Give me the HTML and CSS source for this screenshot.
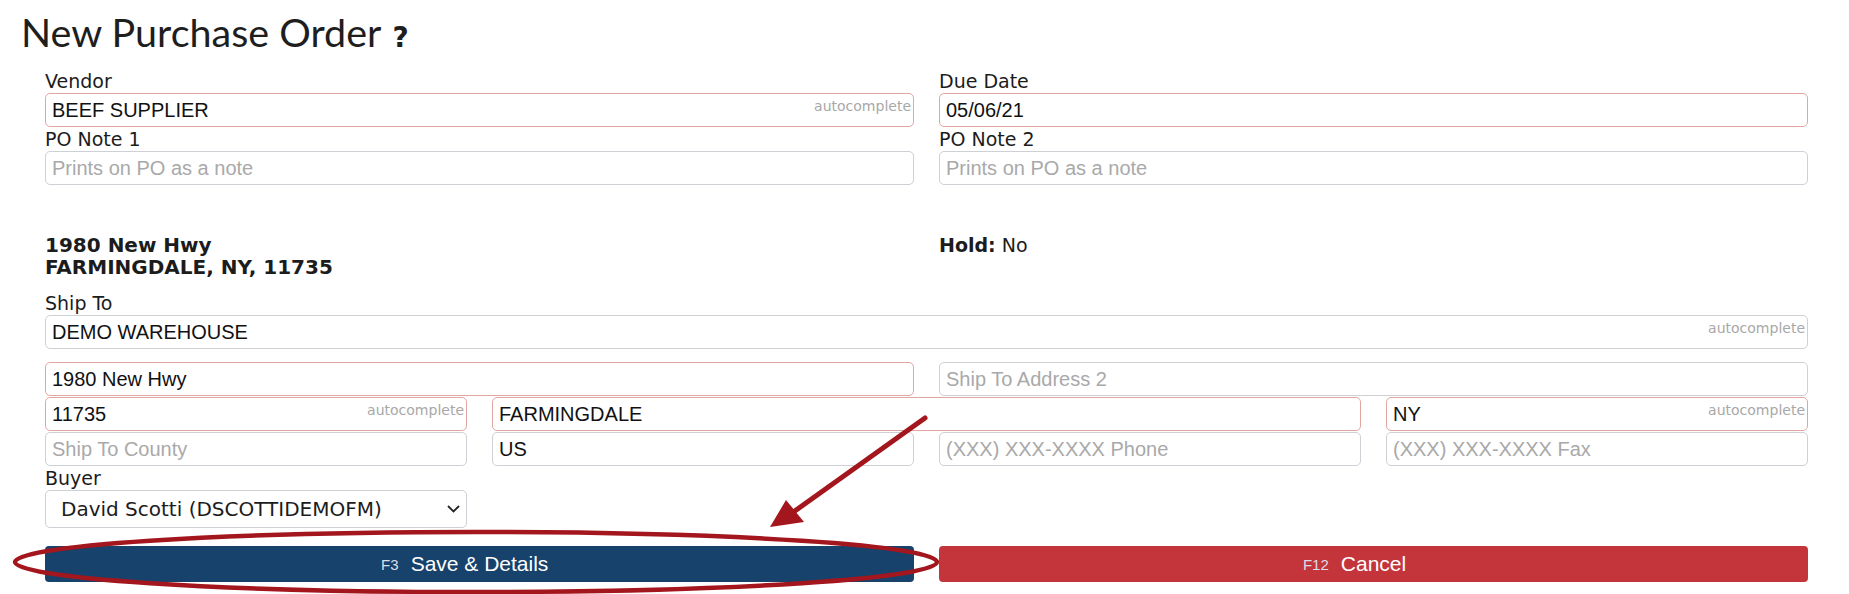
FILE: index.html
```html
<!DOCTYPE html>
<html lang="en">
  <head>
    <meta charset="UTF-8" />
    <meta name="viewport" content="width=device-width, initial-scale=1.0" />
    <title>New Purchase Order</title>
    <link rel="stylesheet" href="styles.css">
  </head>
  <body>
    <h1 class="title">New Purchase Order<span class="help">?</span></h1>

    <form class="po-form">
      <div class="grid two">
        <div class="field">
          <label>Vendor</label>
          <div class="input-wrap">
            <input class="req" type="text" value="BEEF SUPPLIER" />
            <span class="hint">autocomplete</span>
          </div>
        </div>
        <div class="field">
          <label>Due Date</label>
          <input class="req" type="text" value="05/06/21" />
        </div>
        <div class="field">
          <label>PO Note 1</label>
          <input type="text" placeholder="Prints on PO as a note" />
        </div>
        <div class="field">
          <label>PO Note 2</label>
          <input type="text" placeholder="Prints on PO as a note" />
        </div>
      </div>

      <div class="grid two vendor-info">
        <div class="vendor-address">1980 New Hwy<br />FARMINGDALE, NY, 11735</div>
        <div class="hold"><b>Hold:</b> No</div>
      </div>

      <div class="field ship-to">
        <label>Ship To</label>
        <div class="input-wrap">
          <input type="text" value="DEMO WAREHOUSE" />
          <span class="hint">autocomplete</span>
        </div>
      </div>

      <div class="address-rows">
        <div class="grid two">
          <input class="req" type="text" value="1980 New Hwy" />
          <input type="text" placeholder="Ship To Address 2" />
        </div>
        <div class="grid four">
          <div class="input-wrap">
            <input class="req" type="text" value="11735" />
            <span class="hint">autocomplete</span>
          </div>
          <input class="req span-2" type="text" value="FARMINGDALE" />
          <div class="input-wrap">
            <input class="req" type="text" value="NY" />
            <span class="hint">autocomplete</span>
          </div>
        </div>
        <div class="grid four">
          <input type="text" placeholder="Ship To County" />
          <input type="text" value="US" />
          <input type="text" placeholder="(XXX) XXX-XXXX Phone" />
          <input type="text" placeholder="(XXX) XXX-XXXX Fax" />
        </div>
      </div>

      <div class="grid four">
        <div class="field">
          <label>Buyer</label>
          <div class="select-wrap">
            <select>
              <option>David Scotti (DSCOTTIDEMOFM)</option>
            </select>
            <svg class="chevron" width="13" height="8" viewBox="0 0 13 8">
              <path d="M1 1 L6.5 6.5 L12 1" fill="none" stroke="#222" stroke-width="1.8" />
            </svg>
          </div>
        </div>
      </div>

      <div class="grid two actions">
        <button type="button" class="btn btn-save"><span class="label"><span class="key">F3</span>Save &amp; Details</span></button>
        <button type="button" class="btn btn-cancel"><span class="label"><span class="key">F12</span>Cancel</span></button>
      </div>
    </form>

    <!-- annotation drawn over the screenshot -->
    <svg class="annotation" width="1849" height="594" viewBox="0 0 1849 594">
      <ellipse cx="476" cy="562" rx="461" ry="30" fill="none" stroke="#a3161d" stroke-width="4.5" />
      <line x1="925" y1="418" x2="792" y2="513" stroke="#a3161d" stroke-width="5" stroke-linecap="round" />
      <polygon points="770,527 786,500 804,522" fill="#a3161d" />
    </svg>
  </body>
</html>
```

FILE: styles.css
```css
body {
  margin: 0;
  font-family: "DejaVu Sans", Verdana, sans-serif;
  color: #1c1c1c;
  background: #fff;
  overflow: hidden;
}
.title {
  margin: 8px 0 0;
  padding-left: 21px;
  font-family: Lato, "Open Sans", sans-serif;
  font-weight: 400;
  font-size: 39.5px;
  line-height: 48px;
  color: #1e1e1e;
}
.help {
  margin-left: 11px;
  font-family: "DejaVu Sans", sans-serif;
  font-weight: bold;
  font-size: 28px;
  line-height: 20px;
}
.po-form {
  margin-top: 13px;
  padding: 0 41px 0 45px;
}
.grid {
  display: grid;
  column-gap: 25px;
}
.grid.two {
  grid-template-columns: 1fr 1fr;
}
.grid.four {
  grid-template-columns: repeat(4, 1fr);
}
.span-2 {
  grid-column: span 2;
}
.field label {
  display: block;
  font-size: 19px;
  line-height: 24px;
}
.input-wrap,
.select-wrap {
  position: relative;
}
input {
  display: block;
  box-sizing: border-box;
  width: 100%;
  height: 34px;
  margin: 0;
  padding: 0 6px;
  font-family: "Liberation Sans", Arial, sans-serif;
  font-size: 20px;
  color: #111;
  border: 1px solid #cdd0d5;
  border-radius: 5px;
  background: #fff;
  outline: none;
}
input.req {
  border-color: #dfa79f;
}
input::placeholder {
  color: #a9a9a9;
}
.hint {
  position: absolute;
  top: 4px;
  right: 3px;
  font-size: 14px;
  line-height: 18px;
  color: #a8a8a8;
  pointer-events: none;
}
.vendor-info {
  margin-top: 49px;
  font-size: 19px;
  line-height: 22px;
}
.vendor-address {
  font-size: 20px;
  font-weight: bold;
}
.ship-to {
  margin-top: 13px;
}
.address-rows {
  margin-top: 13px;
  display: flex;
  flex-direction: column;
  gap: 1px;
}
select {
  display: block;
  box-sizing: border-box;
  width: 100%;
  height: 38px;
  padding: 0 30px 0 15px;
  font-family: "DejaVu Sans", Verdana, sans-serif;
  font-size: 20px;
  color: #1c1c1c;
  border: 1px solid #cdd0d5;
  border-radius: 5px;
  background: #fff;
  appearance: none;
  -webkit-appearance: none;
}
.chevron {
  position: absolute;
  right: 7px;
  top: 15px;
  pointer-events: none;
}
.actions {
  margin-top: 18px;
}
.btn {
  height: 36px;
  border: none;
  border-radius: 4px;
  color: #fff;
  font-family: "Liberation Sans", Arial, sans-serif;
  font-size: 21px;
  cursor: pointer;
}
.btn-save {
  background-color: #16426c;
}
.btn-cancel {
  background-color: #c4353b;
}
.btn .label {
  position: relative;
}
.btn .key {
  position: absolute;
  right: 100%;
  bottom: 2px;
  margin-right: 12px;
  font-size: 15px;
  color: #d9dfe6;
}
.annotation {
  position: absolute;
  top: 0;
  left: 0;
  pointer-events: none;
}
```
